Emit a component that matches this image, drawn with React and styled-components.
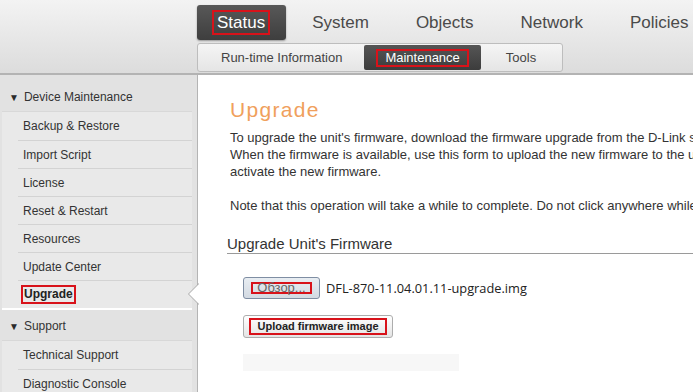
import styled, { createGlobalStyle } from 'styled-components';

const GlobalStyle = createGlobalStyle`
	html, body {
		margin: 0;
		padding: 0;
		background: #ffffff;
	}
	body {
		font-family: 'Liberation Sans', Arial, sans-serif;
	}
`;

const Page = styled.div`
	width: 693px;
	height: 392px;
	overflow: hidden;
	display: flex;
	flex-direction: column;
`;

const Header = styled.header`
	height: 68px;
	flex-shrink: 0;
	padding-left: 197px;
	padding-top: 5px;
	background: linear-gradient(#f3f3f3, #dcdcdc);
	border-bottom: 2px solid #b3b3b3;
`;

const MainTabs = styled.nav`
	display: flex;
	gap: 5px;
	height: 35px;
	white-space: nowrap;
`;

const MainTab = styled.div`
	display: flex;
	align-items: center;
	padding: ${(p) => (p.$active ? '0 16px 0 15px' : '0 21px')};
	font-size: 17px;
	border-radius: 3px;
	color: ${(p) => (p.$active ? '#ffffff' : '#4a4a4a')};
	background: ${(p) => (p.$active ? 'linear-gradient(#585858, #3e3e3e)' : 'transparent')};
	box-shadow: ${(p) => (p.$active ? '0 1px 2px rgba(0,0,0,0.35)' : 'none')};
`;

const SubNav = styled.nav`
	margin-top: 3px;
	width: 362px;
	height: 25px;
	display: flex;
	align-items: stretch;
	padding: 1px;
	border: 1px solid #bdbdbd;
	border-radius: 3px;
	background: linear-gradient(#f5f5f5, #e5e5e5);
	white-space: nowrap;
`;

const SubTab = styled.div`
	display: flex;
	align-items: center;
	justify-content: center;
	padding: 0 ${(p) => p.$pad || 22}px;
	font-size: 13px;
	border-radius: 2px;
	color: ${(p) => (p.$active ? '#ffffff' : '#444444')};
	background: ${(p) => (p.$active ? 'linear-gradient(#555555, #3c3c3c)' : 'transparent')};
`;

const Mark = styled.span`
	display: inline-block;
	border: 2px solid #d8121a;
	padding: ${(p) => p.$pad || '0 3px'};
	line-height: ${(p) => p.$lh || 'normal'};
`;

const Body = styled.div`
	flex: 1;
	display: flex;
	min-height: 0;
`;

const Sidebar = styled.aside`
	width: 197px;
	flex-shrink: 0;
	padding-top: 6px;
	background: #e2e2e2;
	border-right: 1px solid #b4b4b4;
	font-size: 12px;
	color: #333333;
`;

const GroupHeader = styled.div`
	height: 30px;
	box-sizing: border-box;
	padding-top: 2px;
	display: flex;
	align-items: center;
	padding-left: 9px;
	gap: 5px;
	color: #333333;
`;

const Caret = styled.span`
	font-size: 10px;
	color: #2a2a2a;
`;

const Panel = styled.div`
	margin: 0 5px 0 2px;
	background: #e9e9e9;
	border-top: 1px solid #d8d8d8;
	border-bottom: ${(p) => (p.$whiteEdge ? '2px solid #ffffff' : 'none')};
`;

const Item = styled.div`
	position: relative;
	height: 28px;
	box-sizing: border-box;
	display: flex;
	align-items: center;
	margin-left: 16px;
	padding-left: ${(p) => (p.$active ? '3px' : '5px')};
	border-top: ${(p) => (p.$first ? 'none' : '1px solid #d3d3d3')};
	font-weight: ${(p) => (p.$active ? 'bold' : 'normal')};
	color: ${(p) => (p.$active ? '#222222' : '#333333')};
`;

const Pointer = styled.span`
	position: absolute;
	right: -7px;
	top: 2px;
	width: 0;
	height: 0;
	border-top: 11px solid transparent;
	border-bottom: 11px solid transparent;
	border-right: 11px solid #a8a8a8;

	&::after {
		content: '';
		position: absolute;
		top: -10px;
		left: 1px;
		border-top: 10px solid transparent;
		border-bottom: 10px solid transparent;
		border-right: 10px solid #ffffff;
	}
`;

const Content = styled.main`
	flex: 1;
	min-width: 0;
	overflow: hidden;
	padding-left: 32px;
	background: #ffffff;
	color: #333333;
`;

const Title = styled.h1`
	margin: 22px 0 0;
	font-size: 21px;
	line-height: 26px;
	font-weight: normal;
	letter-spacing: 1.3px;
	color: #f0a05c;
`;

const Text = styled.p`
	margin: 6px 0 0;
	font-size: 13px;
	line-height: 17px;
	white-space: nowrap;
	color: #333333;
`;

const SectionTitle = styled.h2`
	margin: 21px 0 0 -3px;
	font-size: 15px;
	line-height: 18px;
	font-weight: normal;
	color: #333333;
	border-bottom: 1px solid #9a9a9a;
	white-space: nowrap;
`;

const Form = styled.div`
	padding-left: 13px;
	display: flex;
	flex-direction: column;
	align-items: flex-start;
`;

const FileRow = styled.div`
	margin-top: 23px;
	display: flex;
	align-items: center;
	gap: 6px;
`;

const BrowseButton = styled.button`
	width: 77px;
	height: 22px;
	padding: 0;
	display: flex;
	align-items: center;
	justify-content: center;
	border: 1px solid #7f8ea3;
	border-radius: 3px;
	background: linear-gradient(#e8edf2, #d3dae2);
	font-family: 'Liberation Sans', Arial, sans-serif;
	font-size: 13px;
	color: #666666;
`;

const FileName = styled.span`
	font-family: 'Open Sans', 'DejaVu Sans', sans-serif;
	font-size: 12.8px;
	color: #222222;
	white-space: nowrap;
`;

const UploadButton = styled.button`
	margin-top: 16px;
	width: 150px;
	height: 23px;
	padding: 0;
	display: flex;
	align-items: center;
	justify-content: center;
	border: 1px solid #adadad;
	border-radius: 3px;
	background: linear-gradient(#ffffff, #e4e4e4);
	font-family: 'Liberation Sans', Arial, sans-serif;
	font-size: 11px;
	font-weight: bold;
	color: #222222;
`;

const Progress = styled.div`
	margin-top: 16px;
	width: 216px;
	height: 17px;
	background: #f7f7f7;
`;

const deviceItems = [
	'Backup & Restore',
	'Import Script',
	'License',
	'Reset & Restart',
	'Resources',
	'Update Center',
];

const App = () => {
	return (
		<Page>
			<GlobalStyle />
			<Header>
				<MainTabs>
					<MainTab $active>
						<Mark $pad='0 3px' $lh='21px'>Status</Mark>
					</MainTab>
					<MainTab>System</MainTab>
					<MainTab>Objects</MainTab>
					<MainTab>Network</MainTab>
					<MainTab>Policies</MainTab>
				</MainTabs>
				<SubNav>
					<SubTab $pad={22}>Run-time Information</SubTab>
					<SubTab $active $pad={12}>
						<Mark $pad='0 7px' $lh='14px'>Maintenance</Mark>
					</SubTab>
					<SubTab $pad={25}>Tools</SubTab>
				</SubNav>
			</Header>
			<Body>
				<Sidebar>
					<GroupHeader>
						<Caret>▼</Caret>Device Maintenance
					</GroupHeader>
					<Panel $whiteEdge>
						{deviceItems.map((name, i) => (
							<Item key={name} $first={i === 0}>
								{name}
							</Item>
						))}
						<Item $active>
							<Mark $pad='0 1px' $lh='15px'>Upgrade</Mark>
							<Pointer />
						</Item>
					</Panel>
					<GroupHeader>
						<Caret>▼</Caret>Support
					</GroupHeader>
					<Panel>
						<Item $first>Technical Support</Item>
						<Item>Diagnostic Console</Item>
					</Panel>
				</Sidebar>
				<Content>
					<Title>Upgrade</Title>
					<Text>
						To upgrade the unit's firmware, download the firmware upgrade from the D-Link support site.
						<br />
						When the firmware is available, use this form to upload the new firmware to the unit. The unit will then restart to
						<br />
						activate the new firmware.
						<br />
						<br />
						Note that this operation will take a while to complete. Do not click anywhere while the upgrade is in progress.
					</Text>
					<SectionTitle>Upgrade Unit's Firmware</SectionTitle>
					<Form>
						<FileRow>
							<BrowseButton type='button'>
								<Mark $pad='0 4px' $lh='8px'>Обзор...</Mark>
							</BrowseButton>
							<FileName>DFL-870-11.04.01.11-upgrade.img</FileName>
						</FileRow>
						<UploadButton type='button'>
							<Mark $pad='0 6px' $lh='13px'>Upload firmware image</Mark>
						</UploadButton>
						<Progress />
					</Form>
				</Content>
			</Body>
		</Page>
	);
};

export default App;
